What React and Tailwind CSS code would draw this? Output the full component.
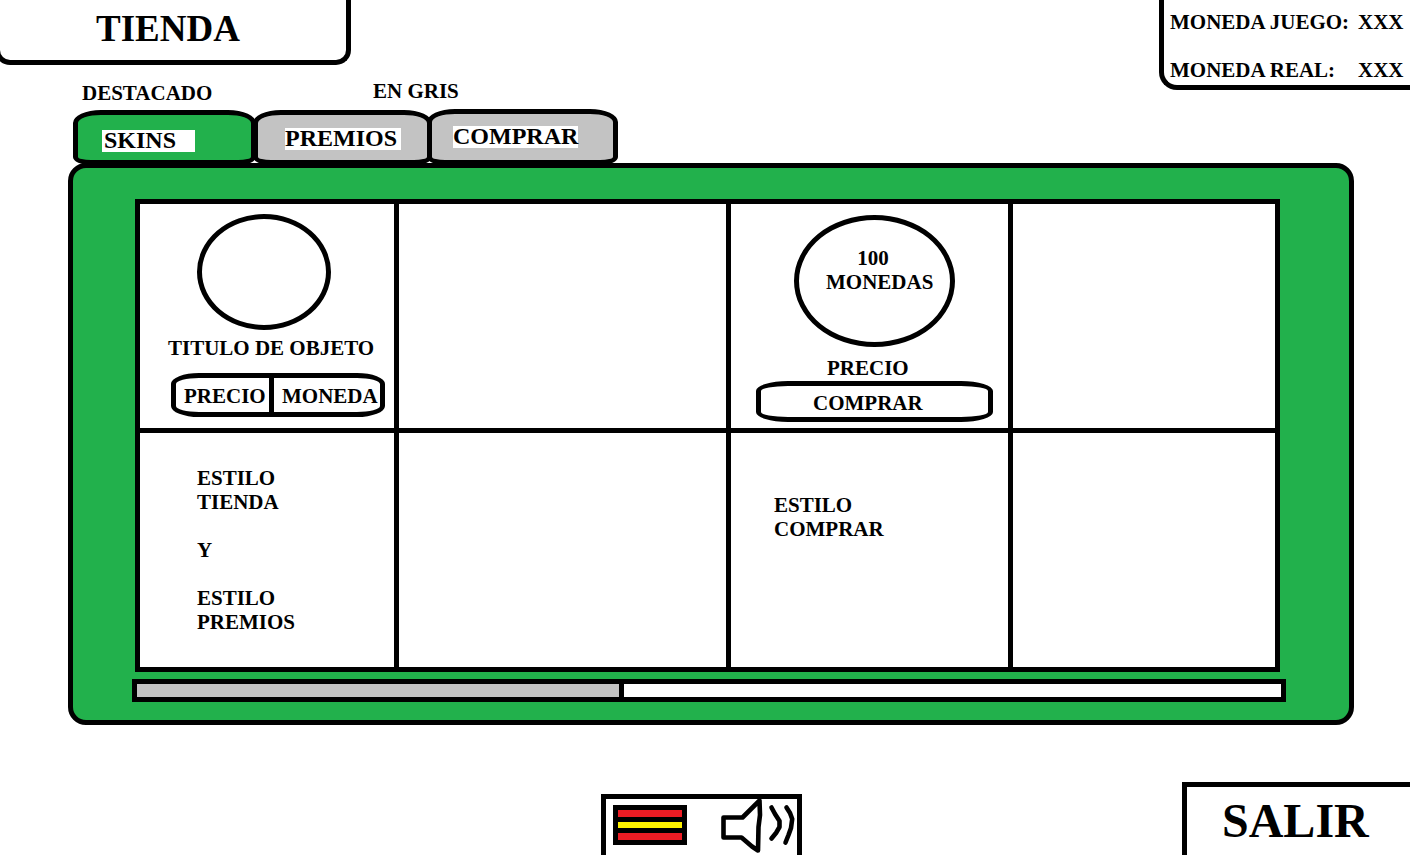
const tabs = [
  {
    name: 'SKINS',
    selected: true,
    box: 'h-[55px] w-[183px] bg-[#22b14c] pt-[15px] pl-[24px]',
    label: 'w-[93px] pl-[2px]',
  },
  {
    name: 'PREMIOS',
    selected: false,
    box: '-ml-[3px] h-[55px] w-[179px] bg-[#c3c3c3] pt-[13px] pl-[27px]',
    label: 'w-[116px]',
  },
  {
    name: 'COMPRAR',
    selected: false,
    box: '-ml-[5px] h-[56px] w-[191px] bg-[#c3c3c3] pt-[12px] pl-[21px]',
    label: 'w-[125px]',
  },
];

function Tab({ name, selected, box, label }) {
  return (
    <button
      type="button"
      role="tab"
      aria-selected={selected}
      className={`flex items-start rounded-[28px_28px_18px_18px/13px_13px_8px_8px] border-5 border-black ${box}`}
    >
      <span className={`bg-white pb-[2px] text-left text-2xl/[20px] whitespace-nowrap ${label}`}>{name}</span>
    </button>
  );
}

function SpanishFlag() {
  return (
    <svg width="74" height="40" viewBox="0 0 74 40" aria-hidden="true">
      <rect width="74" height="40" fill="#000" />
      <rect x="5" y="5" width="64" height="7" fill="#ed1c24" />
      <rect x="5" y="17" width="64" height="6" fill="#fff200" />
      <rect x="5" y="28" width="64" height="7" fill="#ed1c24" />
    </svg>
  );
}

function Speaker() {
  return (
    <svg
      width="78"
      height="56"
      viewBox="0 0 78 56"
      fill="none"
      stroke="#000"
      strokeWidth="4.6"
      strokeLinecap="round"
      strokeLinejoin="round"
      aria-hidden="true"
    >
      <path d="M5.5 18.5H24.5L41.5 1.5L42 16L40.5 28L40 51.5L34 47.5L23.5 38.5H5.5Z" />
      <path d="M53.5 8.5L57 15L61.5 22V28L58 34L53.5 39.5" />
      <path d="M68.5 8.5L72 14L74.2 20L73 29L70.5 36L67.5 43.5" />
    </svg>
  );
}

export default function App() {
  return (
    <div className="flex min-h-screen flex-col overflow-x-hidden bg-white font-['Liberation_Serif',serif] text-[21px]/[24px] font-bold text-black">
      <header className="flex items-start justify-between">
        <div>
          <h1 className="-ml-[5px] flex h-[65px] w-[356px] items-start rounded-b-[15px] border-x-5 border-b-5 border-black pt-[9px] pl-[96px] text-[37px]/[40px]">
            TIENDA
          </h1>
          <div className="flex items-start pt-[14px] pl-[82px]">
            <p className="w-[291px] pt-[2px]">DESTACADO</p>
            <p>EN GRIS</p>
          </div>
          <div role="tablist" aria-label="Secciones" className="flex items-end pt-[4px] pl-[73px]">
            {tabs.map((tab) => (
              <Tab key={tab.name} {...tab} />
            ))}
          </div>
        </div>
        <dl className="grid h-[90px] w-[251px] grid-cols-[188px_auto] content-start gap-y-6 rounded-bl-[18px] border-b-5 border-l-5 border-black pt-[10px] pl-[6px] whitespace-nowrap">
          <dt>MONEDA JUEGO:</dt>
          <dd>XXX</dd>
          <dt>MONEDA REAL:</dt>
          <dd>XXX</dd>
        </dl>
      </header>

      <main className="relative -mt-[2px] mr-[56px] ml-[68px] rounded-[18px] border-5 border-black bg-[#22b14c] pt-[31px] pr-[63px] pb-[18px] pl-[59px]">
        <div className="mr-[6px] ml-[3px] grid grid-cols-[254fr_327fr_277fr_262fr] grid-rows-[minmax(224px,auto)_minmax(234px,auto)] gap-[5px] border-5 border-black bg-black *:min-w-0 *:bg-white">
          <article className="flex flex-col items-start pt-[10px]">
            <div className="ml-[57px] h-[116px] w-[134px] rounded-[50%] border-5 border-black" />
            <h2 className="mt-[6px] ml-[28px] whitespace-nowrap">TITULO DE OBJETO</h2>
            <div className="mt-[13px] ml-[31px] flex h-[44px] w-[214px] items-stretch rounded-[28px/11px] border-5 border-black">
              <span className="flex w-[98px] items-center border-r-5 border-black pt-[2px] pl-[8px]">PRECIO</span>
              <span className="flex items-center pt-[2px] pl-[8px]">MONEDA</span>
            </div>
          </article>
          <article />
          <article className="flex flex-col items-start pt-[11px]">
            <div className="ml-[63px] h-[132px] w-[161px] rounded-[50%] border-5 border-black pt-[26px] pl-[27px]">
              <p className="w-[94px] text-center">100</p>
              <p>MONEDAS</p>
            </div>
            <p className="mt-[9px] ml-[96px]">PRECIO</p>
            <button
              type="button"
              className="mt-px ml-[25px] flex h-[41px] w-[237px] items-center rounded-[32px/10px] border-5 border-black pt-[2px] pl-[52px]"
            >
              COMPRAR
            </button>
          </article>
          <article />
          <article className="pt-[33px] pl-[57px]">
            <p>
              ESTILO
              <br />
              TIENDA
            </p>
            <p className="my-6">Y</p>
            <p>
              ESTILO
              <br />
              PREMIOS
            </p>
          </article>
          <article />
          <article className="pt-[60px] pl-[43px]">
            <p>
              ESTILO
              <br />
              COMPRAR
            </p>
          </article>
          <article />
        </div>
        <div
          role="scrollbar"
          aria-orientation="horizontal"
          aria-label="Desplazamiento"
          aria-controls="root"
          aria-valuenow={0}
          className="mt-[7px] grid h-[23px] grid-cols-[487fr_657fr] border-5 border-black bg-white"
        >
          <div className="border-r-5 border-black bg-[#c3c3c3]" />
        </div>
      </main>

      <footer className="mt-auto grid grid-cols-[601fr_201px_608fr] items-end">
        <div className="col-start-2 flex h-[61px] items-start border-x-5 border-t-5 border-black pl-[7px]">
          <button type="button" aria-label="Idioma" className="mt-[6px]">
            <SpanishFlag />
          </button>
          <button type="button" aria-label="Sonido" className="ml-[31px]">
            <Speaker />
          </button>
        </div>
        <button
          type="button"
          className="flex h-[73px] w-[228px] items-start justify-self-end border-t-5 border-l-5 border-black pt-[6px] pl-[35px] text-5xl/[56px]"
        >
          SALIR
        </button>
      </footer>
    </div>
  );
}
